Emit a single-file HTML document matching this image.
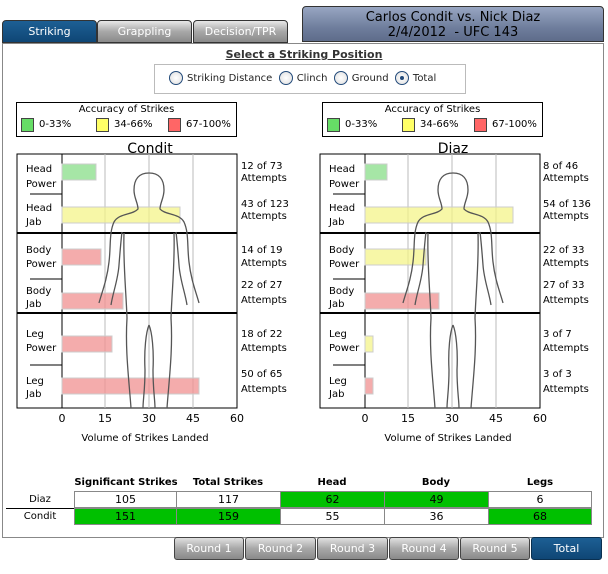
<!DOCTYPE html>
<html><head><meta charset="utf-8"><style>
*{margin:0;padding:0;box-sizing:border-box}
body{width:608px;height:574px;background:#fff;position:relative;overflow:hidden;font-family:"DejaVu Sans","Liberation Sans",sans-serif;font-size:10px;color:#000}
.a{position:absolute}
.tab{position:absolute;top:20px;height:23px;border:1px solid #333;border-radius:4px 4px 0 0;color:#fff;font-size:11px;text-align:center;line-height:22px;background:linear-gradient(#e8e8e8,#a8a8a8 50%,#8a8a8a)}
.btn{position:absolute;top:537px;height:23px;border:1px solid #444;border-radius:3px;color:#fff;font-size:11px;text-align:center;line-height:22px;background:linear-gradient(#e0e0e0,#a8a8a8 50%,#8a8a8a)}
.blue{background:linear-gradient(#1d5f94,#0f4675)!important}
.cell{position:absolute;height:17px;border:1px solid #888;text-align:center;font-size:11px;line-height:15px}
.g{background:#00c000}
.leg{position:absolute;top:102px;width:221px;height:35px;border:1px solid #000}
.sw{position:absolute;top:15px;width:13px;height:14px;border:1px solid #444}
.lt{position:absolute;top:16px;font-size:10px}
.radio{display:inline-block;width:14px;height:14px;border:1px solid #224a7a;border-radius:50%;background:radial-gradient(#fff,#ddd);vertical-align:middle;margin-right:4px;position:relative}
</style></head><body>
<div class="tab blue" style="left:2px;width:95px">Striking</div>
<div class="tab" style="left:97px;width:95px">Grappling</div>
<div class="tab" style="left:193px;width:95px">Decision/TPR</div>
<div class="a" style="left:302px;top:6px;width:302px;height:36px;border:1px solid #333;border-radius:4px 4px 0 0;background:linear-gradient(#98a6c2,#6f7e9d 60%,#5e6c8a);text-align:center;font-size:13px;line-height:15px;padding-top:3px">Carlos Condit vs. Nick Diaz<br>2/4/2012&nbsp; - UFC 143</div>
<div class="a" style="left:2px;top:43px;width:602px;height:495px;border:1px solid #888"></div>
<div class="a" style="left:0;width:608px;top:48px;text-align:center;font-weight:bold;text-decoration:underline;font-size:11px;color:#333">Select a Striking Position</div>
<div class="a" style="left:154px;top:64px;width:312px;height:30px;border:1px solid #bbb;font-size:10px;line-height:28px;padding-left:14px;color:#222">
<span class="radio"></span>Striking Distance&nbsp; <span class="radio"></span>Clinch&nbsp; <span class="radio"></span>Ground&nbsp; <span class="radio"><span style="position:absolute;left:4px;top:4px;width:4px;height:4px;border-radius:50%;background:#224a7a"></span></span>Total</div>

<div class="leg" style="left:16px"><div class="a" style="left:0;width:219px;top:1px;text-align:center">Accuracy of Strikes</div>
<div class="sw" style="left:4px;background:#66dd66"></div><div class="lt" style="left:22px">0-33%</div>
<div class="sw" style="left:79px;background:#ffff66"></div><div class="lt" style="left:97px">34-66%</div>
<div class="sw" style="left:151px;background:#ff6666"></div><div class="lt" style="left:169px">67-100%</div></div>
<div class="leg" style="left:322px"><div class="a" style="left:0;width:219px;top:1px;text-align:center">Accuracy of Strikes</div>
<div class="sw" style="left:4px;background:#66dd66"></div><div class="lt" style="left:22px">0-33%</div>
<div class="sw" style="left:79px;background:#ffff66"></div><div class="lt" style="left:97px">34-66%</div>
<div class="sw" style="left:151px;background:#ff6666"></div><div class="lt" style="left:169px">67-100%</div></div>

<svg class="a" style="left:0;top:0" width="608" height="574" font-family="DejaVu Sans, Liberation Sans, sans-serif" font-size="10">
<defs>
<g id="half" fill="none" stroke="#555" stroke-width="1.3">
<path d="M0,173 C10,173 15,179 15,190 C15,198 11,203 11,209 C16,215 30,213 35,222 C40,233 38,246 40,262 C42,280 47,292 50,303"/>
<path d="M38,305 C36,292 31,280 30,265 C29,252 28,240 27,232"/>
<path d="M25,233 C26,262 23,290 22,318 C24,350 20,380 18,408"/>
<path d="M0,325 C3,332 5,350 4,370 C4,390 6,400 6,408"/>
</g>
<g id="chart">
<rect x="17" y="154" width="220" height="254" fill="#fff" stroke="#000"/>
<g stroke="#bbb"><line x1="105" y1="154" x2="105" y2="408"/><line x1="149" y1="154" x2="149" y2="408"/><line x1="193" y1="154" x2="193" y2="408"/></g>
<line x1="62" y1="154" x2="62" y2="408" stroke="#000"/>
<g stroke="#000"><line x1="30" y1="194" x2="62" y2="194"/><line x1="30" y1="279" x2="62" y2="279"/><line x1="30" y1="365" x2="62" y2="365"/></g>
<g text-anchor="middle" font-size="11"><text x="62" y="422">0</text><text x="105" y="422">15</text><text x="149" y="422">30</text><text x="193" y="422">45</text><text x="237" y="422">60</text></g>
<text x="145" y="441" text-anchor="middle">Volume of Strikes Landed</text>
<g><text x="26" y="172">Head</text><text x="26" y="187">Power</text><text x="26" y="211">Head</text><text x="26" y="225">Jab</text><text x="26" y="253">Body</text><text x="26" y="267">Power</text><text x="26" y="294">Body</text><text x="26" y="307">Jab</text><text x="26" y="337">Leg</text><text x="26" y="351">Power</text><text x="26" y="384">Leg</text><text x="26" y="397">Jab</text></g>
</g>
</defs>
<use href="#chart"/>
<use href="#chart" transform="translate(303,0)"/>
<g stroke="#ccc" fill-opacity="0.75">
<rect x="62" y="164" width="34" height="16" fill="#88dd88"/>
<rect x="62" y="207" width="118" height="16" fill="#f4f48a"/>
<rect x="62" y="249" width="39" height="16" fill="#f09090"/>
<rect x="62" y="293" width="61" height="16" fill="#f09090"/>
<rect x="62" y="336" width="50" height="16" fill="#f09090"/>
<rect x="62" y="378" width="137" height="16" fill="#f09090"/>
<rect x="365" y="164" width="22" height="16" fill="#88dd88"/>
<rect x="365" y="207" width="148" height="16" fill="#f4f48a"/>
<rect x="365" y="249" width="61" height="16" fill="#f4f48a"/>
<rect x="365" y="293" width="74" height="16" fill="#f09090"/>
<rect x="365" y="336" width="8" height="16" fill="#f4f48a"/>
<rect x="365" y="378" width="8" height="16" fill="#f09090"/>
</g>
<g stroke="#000" stroke-width="2"><line x1="17" y1="233" x2="237" y2="233"/><line x1="17" y1="313" x2="237" y2="313"/><line x1="320" y1="233" x2="540" y2="233"/><line x1="320" y1="313" x2="540" y2="313"/></g>
<use href="#half" transform="translate(149,0)"/><use href="#half" transform="translate(149,0) scale(-1,1)"/>
<use href="#half" transform="translate(453,0)"/><use href="#half" transform="translate(453,0) scale(-1,1)"/>
<text x="150" y="153" text-anchor="middle" font-size="14">Condit</text>
<text x="453" y="153" text-anchor="middle" font-size="14">Diaz</text>
<g><text x="241" y="169">12 of 73</text><text x="241" y="181">Attempts</text><text x="241" y="207">43 of 123</text><text x="241" y="219">Attempts</text><text x="241" y="253">14 of 19</text><text x="241" y="266">Attempts</text><text x="241" y="288">22 of 27</text><text x="241" y="303">Attempts</text><text x="241" y="337">18 of 22</text><text x="241" y="351">Attempts</text><text x="241" y="377">50 of 65</text><text x="241" y="392">Attempts</text>
<text x="543" y="169">8 of 46</text><text x="543" y="181">Attempts</text><text x="543" y="207">54 of 136</text><text x="543" y="219">Attempts</text><text x="543" y="253">22 of 33</text><text x="543" y="266">Attempts</text><text x="543" y="288">27 of 33</text><text x="543" y="303">Attempts</text><text x="543" y="337">3 of 7</text><text x="543" y="351">Attempts</text><text x="543" y="377">3 of 3</text><text x="543" y="392">Attempts</text></g>
</svg>

<div class="a" style="top:477px;left:74px;width:104px;text-align:center;font-weight:bold">Significant Strikes</div>
<div class="a" style="top:477px;left:176px;width:104px;text-align:center;font-weight:bold">Total Strikes</div>
<div class="a" style="top:477px;left:280px;width:104px;text-align:center;font-weight:bold">Head</div>
<div class="a" style="top:477px;left:384px;width:104px;text-align:center;font-weight:bold">Body</div>
<div class="a" style="top:477px;left:488px;width:104px;text-align:center;font-weight:bold">Legs</div>
<div class="a" style="top:494px;left:20px;width:40px;text-align:center">Diaz</div>
<div class="a" style="top:511px;left:14px;width:52px;text-align:center">Condit</div>
<div class="cell" style="top:491px;left:74px;width:103px">105</div>
<div class="cell" style="top:491px;left:176px;width:105px">117</div>
<div class="cell g" style="top:491px;left:280px;width:105px">62</div>
<div class="cell g" style="top:491px;left:384px;width:105px">49</div>
<div class="cell" style="top:491px;left:488px;width:104px">6</div>
<div class="a" style="top:508px;left:6px;width:576px;height:1px;background:#000"></div>
<div class="cell g" style="top:508px;left:74px;width:103px">151</div>
<div class="cell g" style="top:508px;left:176px;width:105px">159</div>
<div class="cell" style="top:508px;left:280px;width:105px">55</div>
<div class="cell" style="top:508px;left:384px;width:105px">36</div>
<div class="cell g" style="top:508px;left:488px;width:104px">68</div>

<div class="btn" style="left:174px;width:70px">Round 1</div>
<div class="btn" style="left:245px;width:71px">Round 2</div>
<div class="btn" style="left:317px;width:71px">Round 3</div>
<div class="btn" style="left:389px;width:70px">Round 4</div>
<div class="btn" style="left:460px;width:70px">Round 5</div>
<div class="btn blue" style="left:531px;width:71px;border-color:#0a3050">Total</div>
</body></html>
